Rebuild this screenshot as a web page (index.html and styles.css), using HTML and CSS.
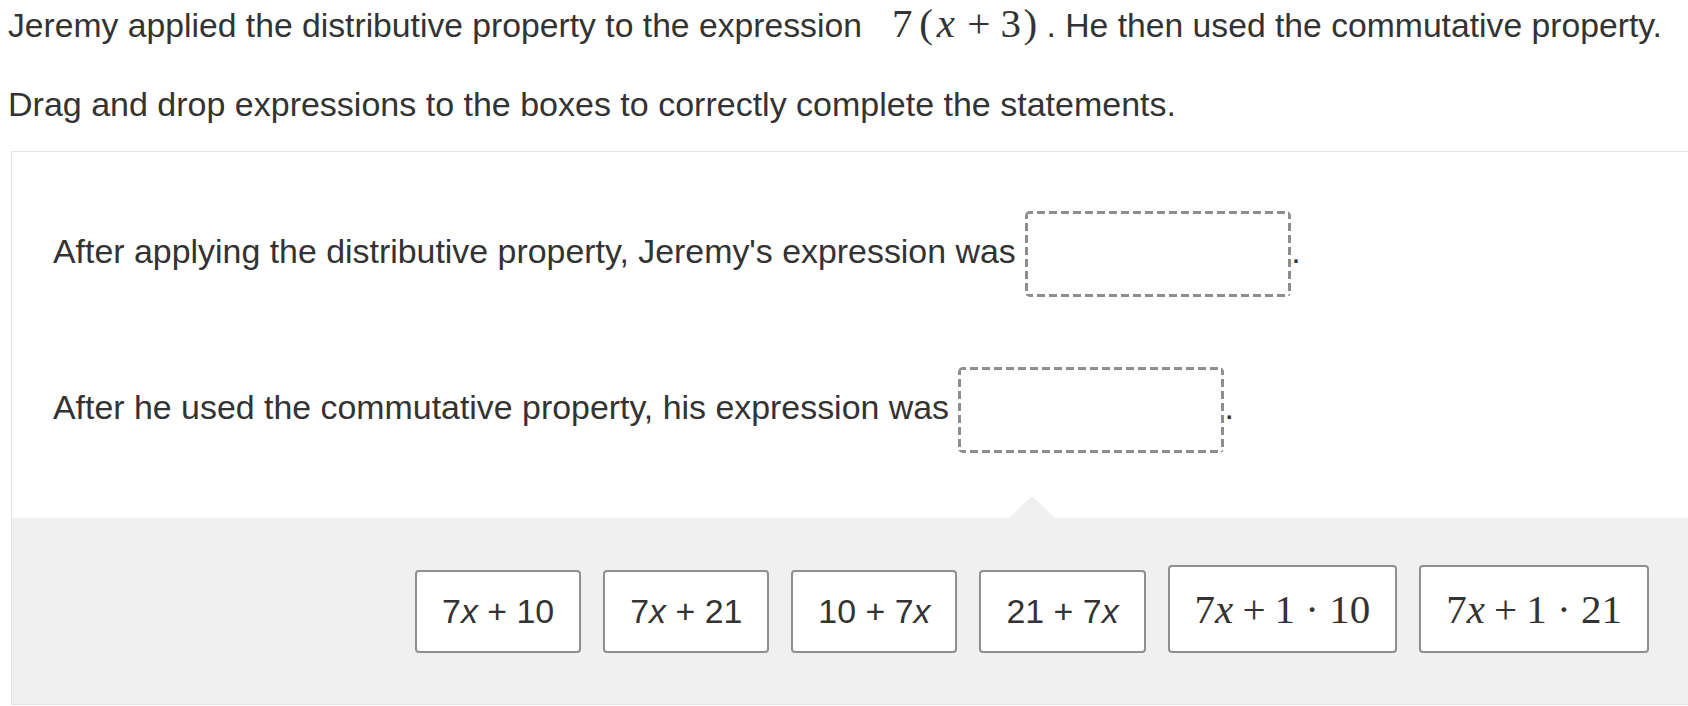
FILE: index.html
```html
<!DOCTYPE html>
<html lang="en">
<head>
<meta charset="utf-8">
<title>Distributive property</title>
<link rel="stylesheet" href="styles.css">
</head>
<body>
<div class="page">
  <p class="prompt first">Jeremy applied the distributive property to the expression<span class="math hm"><span class="mn">7</span><span class="paren open">(</span><span class="mi">x</span><span class="mo">+</span><span class="mn">3</span><span class="paren close">)</span></span> . He then used the commutative property.</p>
  <p class="prompt second">Drag and drop expressions to the boxes to correctly complete the statements.</p>

  <div class="card">
    <div class="statements">
      <div class="statement">After applying the distributive property, Jeremy's expression was <span class="drop"></span>.</div>
      <div class="statement">After he used the commutative property, his expression was <span class="drop"></span>.</div>
    </div>
    <div class="tray">
      <div class="tile"><span class="label">7<i>x</i> + 10</span></div>
      <div class="tile"><span class="label">7<i>x</i> + 21</span></div>
      <div class="tile"><span class="label">10 + 7<i>x</i></span></div>
      <div class="tile"><span class="label">21 + 7<i>x</i></span></div>
      <div class="tile tile-math"><span class="math"><span class="mn">7</span><span class="mi">x</span><span class="mo">+</span><span class="mn">1</span><span class="mo dot">·</span><span class="mn">10</span></span></div>
      <div class="tile tile-math"><span class="math"><span class="mn">7</span><span class="mi">x</span><span class="mo">+</span><span class="mn">1</span><span class="mo dot">·</span><span class="mn">21</span></span></div>
    </div>
  </div>
</div>
</body>
</html>
```

FILE: styles.css
```css
html, body {
  margin: 0;
  padding: 0;
  overflow: hidden;
  background: #fff;
}

.page {
  padding: 5px 0 0 8px;
  font-family: "Liberation Sans", Arial, sans-serif;
  font-size: 33.9px;
  color: #333;
}

.prompt {
  margin: 0;
  line-height: 40px;
  white-space: nowrap;
}

.prompt.first {
  font-size: 33.7px;
}

.prompt.second {
  margin-top: 39px;
  font-size: 34px;
}

.math {
  font-family: "Liberation Serif", "DejaVu Serif", serif;
  font-size: 41px;
  line-height: 1;
  white-space: nowrap;
}

.math .mi {
  font-style: italic;
}

.math .mo {
  margin: 0 0.222em;
}

.math .mo.dot {
  margin: 0 0.25em;
}

.hm {
  margin-left: 30px;
  line-height: 30px;
}

.hm .mi {
  margin: 0 0.05em;
}

.hm .mo {
  margin: 0 0.25em;
}

.hm .paren.open {
  margin: 0 0.04em 0 0.17em;
}

.hm .paren.close {
  margin-left: 0.06em;
}

.card {
  width: 2040px;
  margin: 27px 0 0 3px;
  border: 1px solid #e3e3e3;
  background: #fff;
}

.statements {
  display: flex;
  flex-direction: column;
  gap: 70px;
  padding: 59px 41px 65px;
}

.statement {
  white-space: nowrap;
}

.drop {
  display: inline-block;
  box-sizing: border-box;
  width: 266px;
  height: 86px;
  vertical-align: middle;
  border-radius: 5px;
  background:
    repeating-linear-gradient(90deg, #8e8e8e 0 8px, transparent 8px 12px) left top / 100% 3px no-repeat,
    repeating-linear-gradient(90deg, #8e8e8e 0 8px, transparent 8px 12px) left bottom / 100% 3px no-repeat,
    repeating-linear-gradient(180deg, #8e8e8e 0 8px, transparent 8px 12px) left top / 3px 100% no-repeat,
    repeating-linear-gradient(180deg, #8e8e8e 0 8px, transparent 8px 12px) right top / 3px 100% no-repeat;
}

.tray {
  position: relative;
  display: flex;
  justify-content: center;
  align-items: flex-end;
  gap: 22px;
  padding: 47px 0 51px;
  background: #f0f0f0;
}

.tray::before {
  content: "";
  position: absolute;
  top: -22px;
  left: 50%;
  margin-left: -23px;
  border-left: 23px solid transparent;
  border-right: 23px solid transparent;
  border-bottom: 22px solid #f0f0f0;
}

.tile {
  box-sizing: border-box;
  height: 83px;
  padding: 0 25px;
  display: flex;
  align-items: center;
  justify-content: center;
  background: #fff;
  border: 2px solid #8f8f8f;
  border-radius: 4px;
  white-space: nowrap;
  line-height: 1;
}

.label i {
  font-style: italic;
}

.tile-math {
  height: 88px;
  padding: 0 25px;
}
```
